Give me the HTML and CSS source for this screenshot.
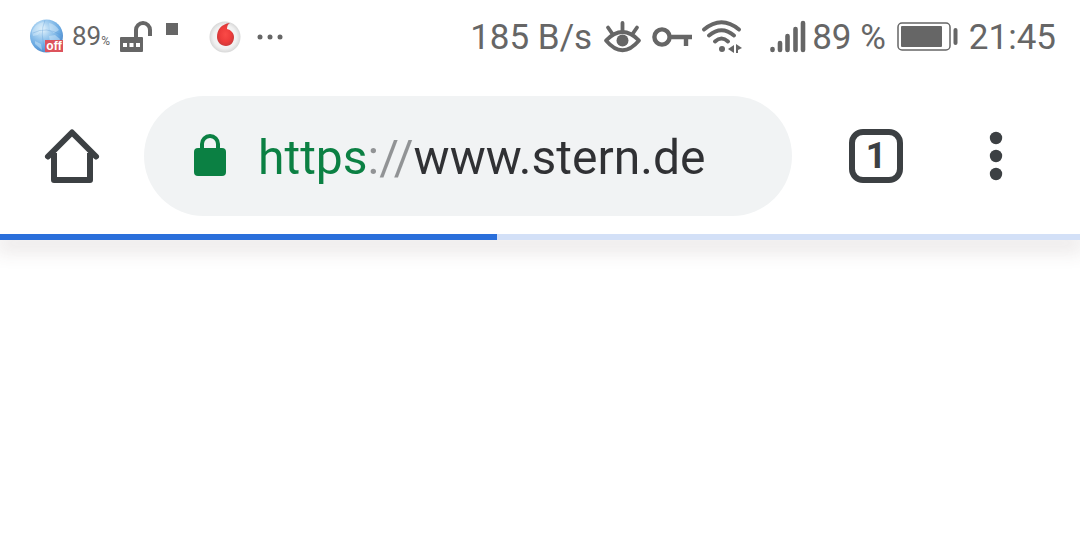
FILE: index.html
```html
<!DOCTYPE html>
<html lang="de">
<head>
<meta charset="utf-8">
<meta name="viewport" content="width=device-width, initial-scale=1">
<title>stern.de</title>
<link rel="stylesheet" href="styles.css">
</head>
<body>
<header class="status">
  <div class="status-group notifications">
    <svg class="globe" width="35" height="36" viewBox="0 0 35 36" aria-hidden="true">
      <defs>
        <radialGradient id="sky" cx=".38" cy=".3" r=".75"><stop offset="0" stop-color="#e4f3fc"/><stop offset=".35" stop-color="#a0ccef"/><stop offset=".7" stop-color="#69a9e2"/><stop offset="1" stop-color="#4b83c6"/></radialGradient>
      </defs>
      <circle cx="17.500" cy="17" r="16.5" fill="url(#sky)"/>
      <path d="M3 12c3-6 7-8 12-9l1 5-4 3-3 5-5 1zM20 4c5 1 8 4 10 7l-5 3-4-3zM20 17l6-1 5 4-2 5-8-2zM6 22l6 3 1 6-7-6z" fill="#d9eefb" opacity=".45"/>
      <path d="M4 14q13-7 28 2M16 1q-6 14 1 32" fill="none" stroke="#4f91d2" stroke-width="1" opacity=".3"/>
      <rect x="16" y="21" width="18" height="12" fill="#dd535c"/>
      <text class="globe-label" x="25" y="31" text-anchor="middle">off</text>
    </svg>
    <span class="mini-level">89<small>%</small></span>
    <svg class="unlock" width="34" height="32" viewBox="0 0 34 32" aria-hidden="true">
      <path d="M17 17V9a7 7 0 0 1 14 0v6" fill="none" stroke="#666" stroke-width="4"/>
      <rect x="1" y="16" width="23" height="15" rx="1" fill="#666"/>
      <path d="M4 22h4v4H4zM10.500 22h4v4h-4zM17 22h4v4h-4z" fill="#fff"/>
    </svg>
    <span class="square"></span>
    <svg class="drop" width="32" height="32" viewBox="0 0 32 32" aria-hidden="true">
      <defs>
        <radialGradient id="pearl"><stop offset="0" stop-color="#fff"/><stop offset=".75" stop-color="#f0f0f0"/><stop offset="1" stop-color="#d8d8d8"/></radialGradient>
        <radialGradient id="red"><stop offset="0" stop-color="#fa4a47"/><stop offset=".65" stop-color="#ee3c3b"/><stop offset="1" stop-color="#cf3a3b"/></radialGradient>
      </defs>
      <circle cx="16" cy="16" r="15.500" fill="url(#pearl)"/>
      <path d="M21 2C12 3 8 9 8 16c0 5 4 9 9 9s8-4 8-9c0-4-3-7-7-8 0-3 1-5 3-6z" fill="url(#red)"/>
    </svg>
    <svg class="more" width="28" height="6" viewBox="0 0 28 6" fill="#666" aria-hidden="true"><circle cx="3" cy="3" r="2.500"/><circle cx="13" cy="3" r="2.500"/><circle cx="23" cy="3" r="2.500"/></svg>
  </div>
  <div class="status-group system">
    <span class="speed">185 B/s</span>
    <svg class="eye" width="37" height="32" viewBox="0 0 37 32" fill="none" stroke="#666" aria-hidden="true">
      <path d="M2 19.500Q18.500 2.500 35 19.500Q18.500 39 2 19.500Z" stroke-width="3.800" stroke-linejoin="round"/>
      <path d="M18.500 10V2M8.500 13L4 6.500M28.500 13L33 6.500" stroke-width="3.800" stroke-linecap="round"/>
      <circle cx="18.500" cy="19.500" r="6" fill="#666" stroke="none"/>
    </svg>
    <svg class="key" width="42" height="22" viewBox="0 0 42 22" fill="none" stroke="#666" stroke-width="4.400" aria-hidden="true"><circle cx="10" cy="11" r="7.600"/><path d="M18 11h22M34 11v9"/></svg>
    <svg class="wifi" width="42" height="34" viewBox="0 0 42 34" fill="none" stroke="#666" aria-hidden="true">
      <path d="M2 9.500Q19.500 -5 37 9.500M7 15.500Q19.500 5 32 15.500M13 21.500Q19.500 15.500 26 21.500" stroke-width="4" stroke-linecap="round"/>
      <g fill="#666" stroke="none"><circle cx="20" cy="29" r="3"/><path d="M32 25v8l-6-4zM34 24l6 4-4 2v3h-2z"/></g>
    </svg>
    <svg class="signal" width="36" height="34" viewBox="0 0 36 34" stroke="#666" stroke-width="4.600" stroke-linecap="round" aria-hidden="true"><path d="M2.500 29v1M10 23v7M17.500 16v14M25.500 9v21M33 3v27"/></svg>
    <span class="level">89 %</span>
    <svg class="battery" width="62" height="30" viewBox="0 0 62 30" aria-hidden="true"><rect x="1" y="1" width="52" height="27" rx="4" fill="none" stroke="#666" stroke-width="1.500"/><rect x="4" y="4" width="41" height="21" rx="1" fill="#666"/><path d="M58.500 8v13" stroke="#666" stroke-width="4" stroke-linecap="round"/></svg>
    <time>21:45</time>
  </div>
</header>
<nav class="toolbar">
  <button class="icon-button home" type="button" aria-label="Startseite">
    <svg width="54" height="56" viewBox="0 0 54 56" fill="none" stroke="#3c4043" stroke-width="6" stroke-linejoin="round" aria-hidden="true"><path d="M3 28.500L27 4.500L51 28.500" stroke-linecap="round"/><path d="M9 25v27h36V25"/></svg>
  </button>
  <form class="address">
    <svg class="padlock" width="32" height="44" viewBox="0 0 32 44" aria-hidden="true"><path d="M8 17V10a8 8 0 0 1 16 0v7" fill="none" stroke="#0b8043" stroke-width="4"/><rect y="14" width="32" height="28" rx="4" fill="#0b8043"/></svg>
    <input class="url" type="text" value="https://www.stern.de" aria-label="Adresse" spellcheck="false">
  </form>
  <button class="tabs" type="button" aria-label="1 Tab">1</button>
  <button class="icon-button menu" type="button" aria-label="Menü">
    <svg width="14" height="50" viewBox="0 0 14 50" fill="#3c4043" aria-hidden="true"><circle cx="7" cy="7" r="6.200"/><circle cx="7" cy="25" r="6.200"/><circle cx="7" cy="43" r="6.200"/></svg>
  </button>
</nav>
<div class="progress" role="progressbar" aria-label="Seite wird geladen" aria-valuenow="46" aria-valuemin="0" aria-valuemax="100"><div class="progress-fill" style="width:46%"></div></div>
<main class="page"></main>
</body>
</html>
```
FILE: styles.css
```css
* { box-sizing: border-box; }
body {
  margin: 0;
  min-height: 100vh;
  background: #fff;
  font-family: Roboto, "Liberation Sans", sans-serif;
  color: #3c4043;
}
svg { display: block; flex: none; overflow: visible; }
button { padding: 0; border: 0; background: none; color: inherit; font: inherit; cursor: pointer; }

.status {
  display: flex;
  justify-content: space-between;
  height: 74px;
  padding: 0 24px 0 29px;
  color: #666;
  font-size: 35px;
  line-height: 40px;
  white-space: nowrap;
}
.status-group { display: flex; align-items: center; }
.status-group > span:not(.square), .status-group > time { padding-top: 2px; }
.globe-label { font: bold 12px "Liberation Sans", sans-serif; fill: #fff; }
.mini-level { margin-left: 8px; font-size: 26px; }
.mini-level small { font-size: 12px; }
.unlock { margin-left: 9px; }
.square { width: 12px; height: 12px; margin: 0 31px 16px 13px; background: #666; }
.more { margin-left: 16px; }
.eye { margin-left: 12px; }
.key { margin-left: 11px; }
.wifi { margin-left: 8px; }
.signal { margin-left: 26px; }
.level { margin-left: 6px; }
.battery { margin: 0 10px 0 11px; }

.toolbar {
  display: flex;
  align-items: center;
  padding: 22px 77px 18px 45px;
}
.address {
  display: flex;
  flex: 1;
  align-items: center;
  min-width: 0;
  height: 120px;
  margin: 0 57px 0 45px;
  padding: 0 50px;
  border-radius: 60px;
  background: #f1f3f4;
}
.url {
  flex: 1;
  min-width: 0;
  height: 64px;
  margin: 4px 0 0 32px;
  padding: 0;
  border: 0;
  outline: 0;
  background: linear-gradient(to right, #0b8043 0 110px, #919395 110px 155px, #303134 155px);
  background-clip: text;
  -webkit-background-clip: text;
  color: transparent;
  caret-color: #303134;
  font: 48px/64px Roboto, "Liberation Sans", sans-serif;
}
.tabs {
  width: 54px;
  height: 54px;
  margin-right: 86px;
  border: 6px solid #3c4043;
  border-radius: 14px;
  font-size: 36px;
  font-weight: 700;
  line-height: 42px;
}
.progress {
  height: 6px;
  background: #d3e0f7;
  box-shadow: 0 6px 20px 4px rgba(90, 60, 60, .16);
  clip-path: inset(0 0 -40px 0);
}
.progress-fill { height: 100%; background: #2a6fdb; }
```
